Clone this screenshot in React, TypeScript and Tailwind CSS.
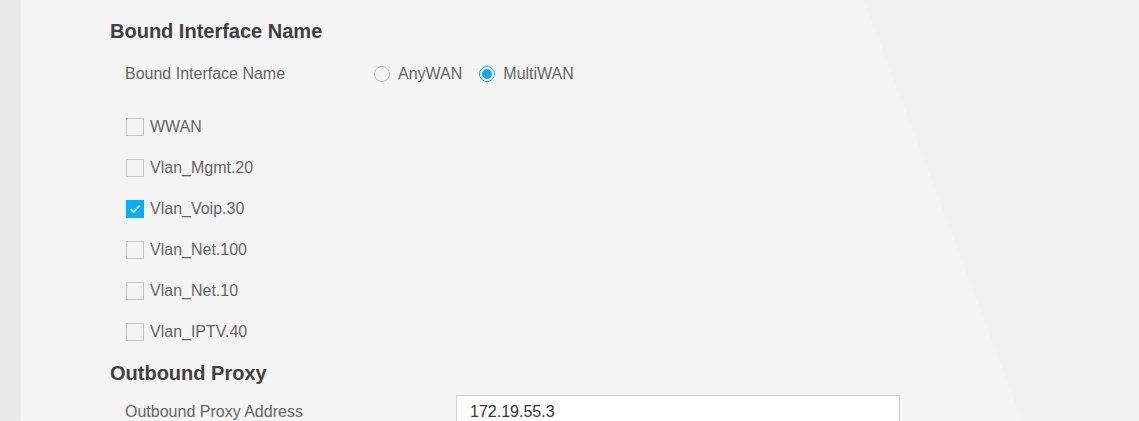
import { useState } from "react";

const ifaces = ["WWAN", "Vlan_Mgmt.20", "Vlan_Voip.30", "Vlan_Net.100", "Vlan_Net.10", "Vlan_IPTV.40"];

const Radio = ({ on, label, onClick }: { on: boolean; label: string; onClick: () => void }) => (
  <label className="flex cursor-pointer items-center" onClick={onClick}>
    <span
      className={`flex h-[16px] w-[16px] items-center justify-center rounded-full border ${on ? "border-[#0aaaf5] bg-white" : "border-[#bdbdbd] bg-transparent"}`}
    >
      {on && <span className="h-[10px] w-[10px] rounded-full bg-[#0aaaf5]" />}
    </span>
    <span className="ml-[8px]">{label}</span>
  </label>
);

const App = () => {
  const [mode, setMode] = useState("multi");
  const [checked, setChecked] = useState<string[]>(["Vlan_Voip.30"]);

  const toggle = (name: string) => {
    // flip the checkbox for this interface
    setChecked((c) => (c.includes(name) ? c.filter((x) => x !== name) : [...c, name]));
  };

  return (
    <div className="flex h-[421px] w-full overflow-hidden bg-[#f4f4f4] font-['Liberation_Sans',Arial,sans-serif] text-[16px] text-[#666]">
      <div className="z-10 w-[19px] shrink-0 bg-[#e9e9e9] shadow-[1px_0_2px_rgba(0,0,0,0.08)]" />
      <div className="relative flex-1">
        <svg className="absolute inset-0 h-full w-full" viewBox="0 0 1120 421" preserveAspectRatio="none">
          <polygon points="845,0 1120,0 1120,421 1003,421" fill="#f1f1f1" />
        </svg>
        <div className="relative pl-[91px]">
          <h2 className="mt-[19px] h-[24px] text-[20px] leading-[24px] font-bold text-[#404040]">Bound Interface Name</h2>
          <div className="mt-[11px] flex h-[40px] items-center pl-[15px]">
            <span className="w-[249px]">Bound Interface Name</span>
            <div className="flex items-center gap-[17px]">
              <Radio on={mode === "any"} label="AnyWAN" onClick={() => setMode("any")} />
              <Radio on={mode === "multi"} label="MultiWAN" onClick={() => setMode("multi")} />
            </div>
          </div>
          <div className="mt-[12px] flex flex-col pl-[16px]">
            {ifaces.map((name) => {
              const on = checked.includes(name);
              return (
                <label key={name} className="flex h-[41px] cursor-pointer items-center" onClick={() => toggle(name)}>
                  <span
                    className={`flex h-[18px] w-[18px] items-center justify-center border ${on ? "border-[#00b0ff] bg-[#00b0ff]" : "border-[#c6c6c6] bg-transparent"}`}
                  >
                    {on && (
                      <svg width="12" height="10" viewBox="0 0 12 10" fill="none">
                        <path d="M1.5 5.2 L4.6 8 L10.5 1.8" stroke="white" strokeWidth="1.8" />
                      </svg>
                    )}
                  </span>
                  <span className="ml-[6px]">{name}</span>
                </label>
              );
            })}
          </div>
          <h2 className="mt-[9px] h-[24px] text-[20px] leading-[24px] font-bold text-[#404040]">Outbound Proxy</h2>
          <div className="mt-[10px] flex items-center pl-[15px]">
            <span className="w-[331px]">Outbound Proxy Address</span>
            <div className="flex h-[34px] w-[444px] items-center border border-[#cdd1da] bg-white px-[13px] text-[#333]">
              172.19.55.3
            </div>
          </div>
        </div>
      </div>
    </div>
  );
};

export default App;
